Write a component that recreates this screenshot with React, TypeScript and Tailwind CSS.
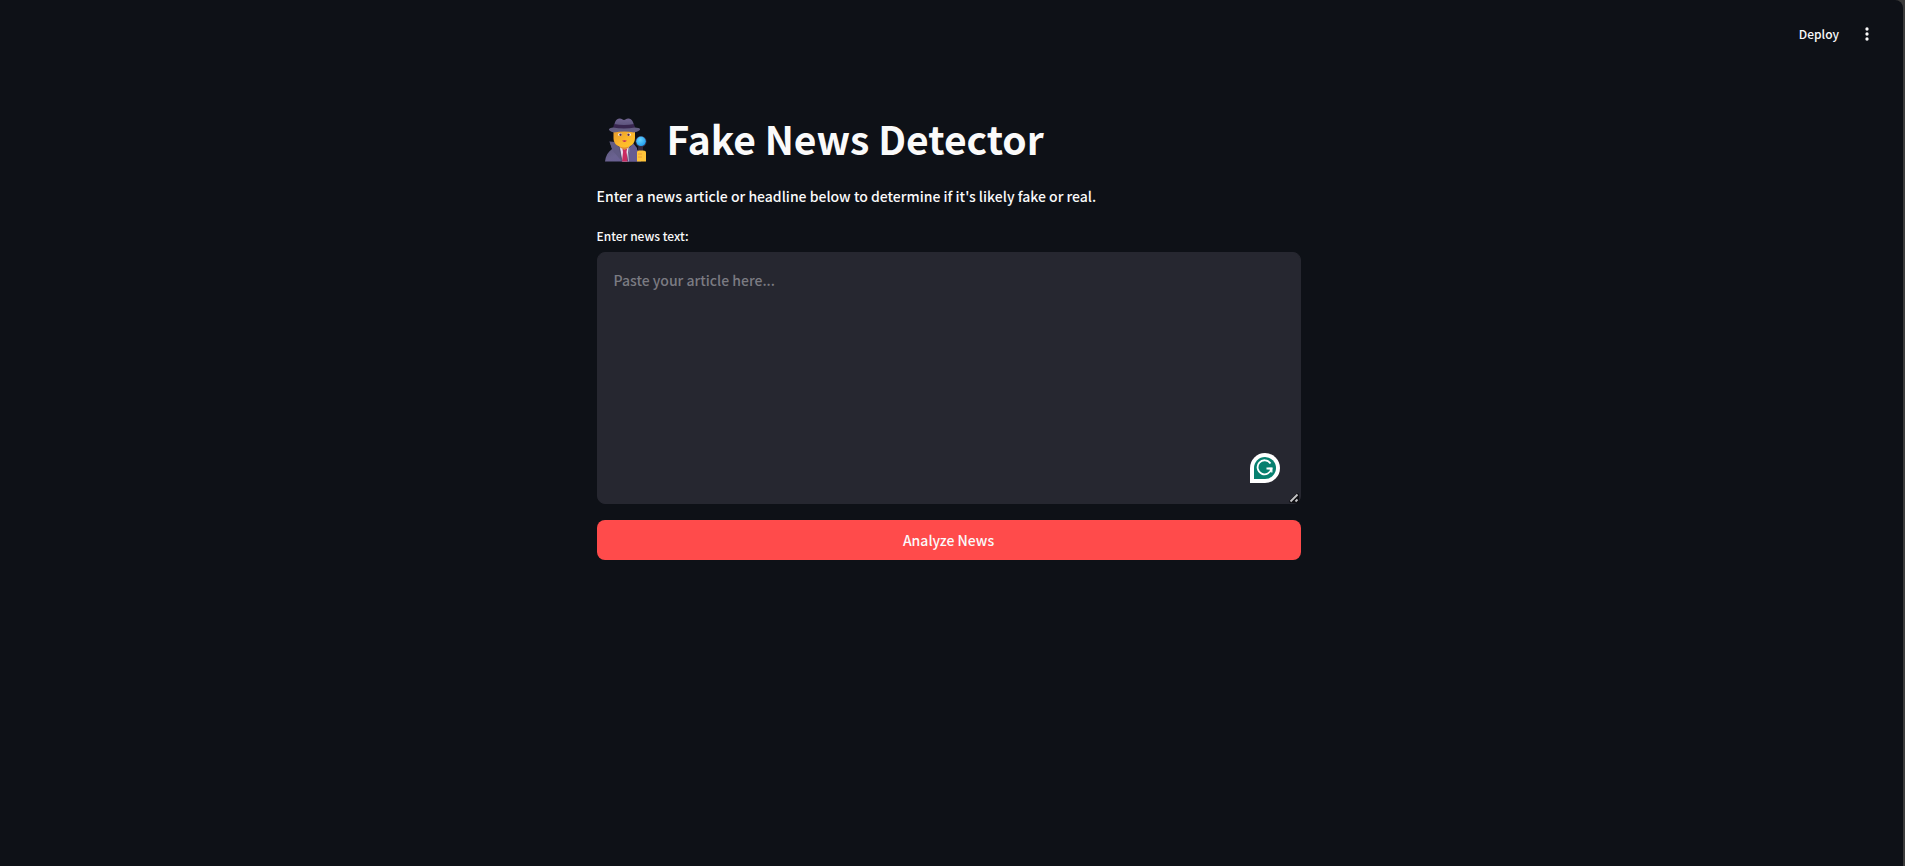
import { useState } from "react";

function DetectiveIcon() {
  return (
    <svg viewBox="0 -4 42 48" className="h-12 w-[42px] shrink-0" aria-hidden="true">
      <defs>
        <linearGradient id="hat" x1="0" y1="0" x2="0" y2="1">
          <stop offset="0" stopColor="#6f638f" />
          <stop offset="1" stopColor="#575078" />
        </linearGradient>
        <linearGradient id="coat" x1="0" y1="0" x2="1" y2="1">
          <stop offset="0" stopColor="#585575" />
          <stop offset="0.5" stopColor="#6a6290" />
          <stop offset="1" stopColor="#665b96" />
        </linearGradient>
        <linearGradient id="face" x1="0" y1="0" x2="1" y2="1">
          <stop offset="0" stopColor="#e79a2c" />
          <stop offset="0.55" stopColor="#fdb82b" />
          <stop offset="1" stopColor="#ffc928" />
        </linearGradient>
        <radialGradient id="lens" cx="0.4" cy="0.35" r="0.7">
          <stop offset="0" stopColor="#6ad4ff" />
          <stop offset="1" stopColor="#1c9cee" />
        </radialGradient>
      </defs>
      <path d="M0 43.500C.5 38 3 34 7 31L4.500 23.500L14 28H25L31 31C35 33 36 37 36 43.500Z" fill="url(#coat)" />
      <path d="M4.500 23.500L11 24L15 30L17 43.500L8 33Z" fill="#605a83" />
      <path d="M32 43.500V30L28 25L23 30L22 43.500Z" fill="#665c91" />
      <path d="M14.500 28.500H24.500L23.500 43.500H17Z" fill="#e6dff0" />
      <path d="M17.500 31H22L21.500 34L23 43.500H17L18 34Z" fill="#c92b61" />
      <path d="M9.500 24L14.500 29.500L17 43.500M28 26L24 30L22.500 43.500" fill="none" stroke="#4c4568" strokeWidth="0.800" />
      <path d="M15 26H24V29.500L19.500 32L15 29.500Z" fill="#df8d35" />
      <path d="M8.500 13H30V20C30 26 25 29.500 19.500 29.500C13 29.500 8.500 26 8.500 20Z" fill="url(#face)" />
      <ellipse cx="15" cy="16.500" rx="2" ry="1.600" fill="#fff2dd" />
      <ellipse cx="24" cy="16.500" rx="2" ry="1.600" fill="#fff2dd" />
      <circle cx="15.500" cy="16.700" r="1.200" fill="#62304a" />
      <circle cx="23.500" cy="16.700" r="1.200" fill="#62304a" />
      <path d="M17 22.800Q19.500 21.800 22 22.800Q19.500 25 17 22.800Z" fill="#c42659" />
      <path d="M9 9.500C9.500 4 11 .8 14.500 .6C17 .5 17.500 2 19 2C20.500 2 21 .5 23.500 .6C27 .8 28.500 4 29.500 9.500Z" fill="url(#hat)" />
      <path d="M9 6Q19 8 29 6L30 10.500Q19 13 8 10.500Z" fill="#38264f" />
      <path d="M4 11Q5 9.500 8 9.500Q19 11.500 30 9.500Q34 9.500 35 11C35.500 13 31 14 29 14.500Q19 12.500 9 14.500C7 14 3.500 13 4 11Z" fill="#655f83" />
      <path d="M33.500 27H38V34H32.500Z" fill="#352a40" />
      <circle cx="36" cy="23.500" r="5.600" fill="#352e4a" />
      <circle cx="36" cy="23.300" r="4.800" fill="url(#lens)" />
      <path d="M32 34Q32 32.500 34 32.500H38Q41 32.500 41 34.500V43.500H32Z" fill="#ffc43a" />
      <path d="M33 36H37M33 39H37" stroke="#e79535" strokeWidth="0.800" />
    </svg>
  );
}

function GrammarlyBadge() {
  return (
    <svg viewBox="0 0 30 30" className="size-[30px]" aria-hidden="true">
      <path d="M15 0A15 15 0 0 1 15 30H0V15A15 15 0 0 1 15 0Z" fill="#fff" />
      <path d="M15 4A11 11 0 0 1 15 26H4V15A11 11 0 0 1 15 4Z" fill="#07806f" />
      <path d="M20.500 10.500A7 7 0 1 0 21.500 15.500H16.500" fill="none" stroke="#fff" strokeWidth="1.800" />
      <path d="M18.500 15.500H21.800V19.500" fill="none" stroke="#fff" strokeWidth="1.300" />
    </svg>
  );
}

function ResizeGrip() {
  return (
    <svg viewBox="0 0 10 10" className="size-2.5" aria-hidden="true">
      <path d="M0 8L8 0L10 1V10H1Z" fill="#0f0f13" />
      <path d="M1.500 8.500L8.500 1.500M6.500 8.500L8.500 6.500" stroke="#c4c4c6" strokeWidth="1.800" />
    </svg>
  );
}

export default function App() {
  const [text, setText] = useState("");
  return (
    <div className="bg-[#3b3b3b] pr-0.5">
      <div className="flex min-h-screen flex-col rounded-tr-lg bg-[#0e1117] pr-1.5 font-['Noto_Sans_CJK_SC',sans-serif] text-[#fafafa]">
        <header className="flex h-[68px] items-center justify-end gap-2 pr-[18px]">
          <button type="button" className="px-2 text-[12px] leading-5 font-medium">Deploy</button>
          <button type="button" aria-label="Main menu" className="flex size-6 items-center justify-center">
            <svg viewBox="0 0 24 24" className="size-5" fill="currentColor" aria-hidden="true">
              <circle cx="12" cy="6" r="2" />
              <circle cx="12" cy="12" r="2" />
              <circle cx="12" cy="18" r="2" />
            </svg>
          </button>
        </header>
        <main className="mx-auto w-full max-w-[704px] pt-11">
          <h1 className="flex h-[52px] items-center gap-5 pl-2 text-[39px] leading-[52px] font-bold">
            <DetectiveIcon />
            Fake News Detector
          </h1>
          <p className="mt-5 text-[14px] leading-6 font-medium">
            Enter a news article or headline below to determine if it's likely fake or real.
          </p>
          <label htmlFor="news" className="mt-4 block text-[12px] leading-6 font-medium">Enter news text:</label>
          <div className="relative mt-1">
            <textarea
              id="news"
              value={text}
              onChange={(e) => setText(e.target.value)}
              placeholder="Paste your article here..."
              className="block h-[252px] w-full resize-y rounded-lg border border-[#262730] bg-[#262730] px-4 py-[15px] text-[14px] leading-6 font-medium outline-none placeholder:text-[#7b7b82]"
            />
            <div className="pointer-events-none absolute right-[21px] bottom-[21px]">
              <GrammarlyBadge />
            </div>
            <div className="pointer-events-none absolute right-0.5 bottom-px">
              <ResizeGrip />
            </div>
          </div>
          <button type="button" className="mt-4 h-10 w-full rounded-lg bg-[#ff4b4b] text-[14px] leading-6 font-medium">
            Analyze News
          </button>
        </main>
      </div>
    </div>
  );
}
